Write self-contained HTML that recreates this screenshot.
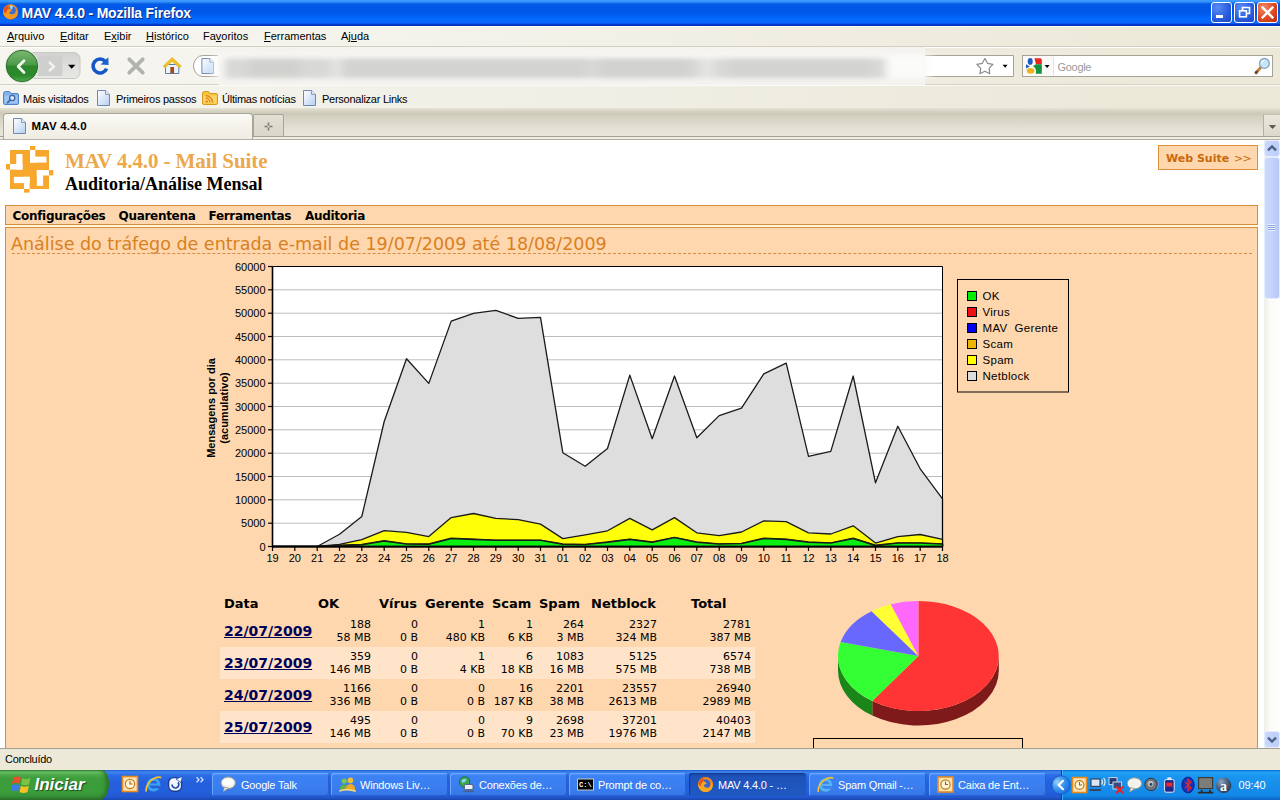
<!DOCTYPE html>
<html lang="pt-BR">
<head>
<meta charset="utf-8">
<title>MAV 4.4.0 - Mozilla Firefox</title>
<style>
*{box-sizing:border-box;margin:0;padding:0}
html,body{width:1280px;height:800px;overflow:hidden;background:#ECE9D8}
body{position:relative;font-family:"Liberation Sans",sans-serif;font-size:11px;color:#000}
.abs{position:absolute}
/* ---------- title bar ---------- */
#titlebar{left:0;top:0;width:1280px;height:26px;background:linear-gradient(to bottom,#3D9BFF 0,#3A96FF 1.5px,#1573EA 3px,#0359E6 4.5px,#0057E6 12px,#005EF4 15px,#0468FC 18px,#0866FE 23px,#0438C8 24.5px,#0030C0 26px)}
#titlebar .ttl{left:21.5px;top:5px;color:#fff;font-weight:bold;font-size:14px;line-height:16px;letter-spacing:-.2px;text-shadow:1px 1px 0 #0A2A80;white-space:nowrap}
.wbtn svg{display:block}
.wbtn{top:2px;width:21px;height:21px;border:1px solid #fff;border-radius:3px;background:radial-gradient(circle at 30% 25%,#5A8CF5 0%,#2A5FE0 55%,#1B45C4 100%)}
#wclose{background:radial-gradient(circle at 30% 25%,#F08A68 0%,#DF4A22 55%,#B92C10 100%)}
/* ---------- menu bar ---------- */
#menubar{left:0;top:26px;width:1280px;height:21px;background:linear-gradient(to right,#F6F5F0 0%,#F3F2EA 40%,#EDEADB 85%,#ECE9D8 100%);border-top:1px solid #FFFAEA;border-bottom:1px solid #D3D0C2}
#menubar span{position:absolute;top:2px;font-size:11px;line-height:14px;white-space:nowrap}
#menubar u{text-decoration:underline}
/* ---------- nav toolbar ---------- */
#navbar{left:0;top:47px;width:1280px;height:38px;background:linear-gradient(to right,#F6F5F0 0%,#F3F2EA 40%,#EDEADB 85%,#ECE9D8 100%);border-top:1px solid #FDFDFB;border-bottom:1px solid #D5D2C4}
#bmbar{left:0;top:85px;width:1280px;height:23px;background:linear-gradient(to right,#F5F4EE 0%,#F1F0E7 40%,#ECE9DA 85%,#EBE8D7 100%);border-top:1px solid #FBFAF6}
#bmbar span{position:absolute;top:6px;font-size:11px;letter-spacing:-.25px;line-height:14px;white-space:nowrap}
/* ---------- tab bar ---------- */
#tabbar{left:0;top:108px;width:1280px;height:29px;background:linear-gradient(to bottom,#E6E3D6 0%,#D6D2C2 12%,#CECAB9 20%,#D3D0C0 30%,#DDDACD 55%,#E5E2D6 80%,#E8E5DA 100%);border-bottom:1px solid #A5A293}
#tabstrip{left:0;top:137px;width:1280px;height:3px;background:#EEECE3;border-bottom:1px solid #B3B0A2;z-index:1}
#tab1{left:3px;top:5px;width:250px;height:26px;border:1px solid #A9A698;border-bottom:none;border-radius:4px 4px 0 0;background:linear-gradient(to bottom,#FBFAF6 0%,#F4F2EA 50%,#EEECE3 100%)}
#tabbar{z-index:2}
#tab1 .t{left:27.5px;top:5px;font-weight:bold;font-size:11.5px;letter-spacing:.2px;line-height:14px;white-space:nowrap}
#newtab{left:253px;top:6px;width:31px;height:22px;border:1px solid #A9A698;border-bottom:none;border-radius:2px 2px 0 0;background:linear-gradient(to bottom,#E2DFD3,#DAD7CA)}
#tablist{left:1263px;top:6px;width:17px;height:22px;border-left:1px solid #B4B1A3;border-top:1px solid #C4C1B3;background:linear-gradient(to bottom,#E9E6DB,#DCD9CC)}
/* ---------- content ---------- */
#content{left:0;top:139px;width:1264px;height:609px;background:#fff;overflow:hidden}
#vscroll{left:1264px;top:139px;width:16px;height:609px;background:linear-gradient(to right,#F0EFE8 0%,#FBFBF8 40%,#FEFEFC 100%)}
#h1{left:65px;top:9.5px;font:bold 21px/24px "Liberation Serif",serif;letter-spacing:-.1px;color:#EBA94B;white-space:nowrap}
#h2{left:65px;top:34px;font:bold 18px/22px "Liberation Serif",serif;color:#000;white-space:nowrap}
#websuite{left:1158px;top:6px;width:100px;height:25px;border:1px solid #E0923A;background:#FFD7AE}
#websuite span{position:absolute;left:7px;top:5.5px;font:bold 11px/14px "DejaVu Sans","Liberation Sans",sans-serif;color:#C8690C;white-space:nowrap}
#mnu{left:5px;top:66px;width:1253px;height:20px;border:1px solid #D58C3F;background:#FFD7AE}
#mnu span{position:absolute;top:3px;font:bold 12px/14px "DejaVu Sans","Liberation Sans",sans-serif;letter-spacing:-.3px;color:#000;white-space:nowrap}
#panel{left:5px;top:88px;width:1253px;height:560px;border:1px solid #D88E3C;background:#FFD7AE}
#ptitle{left:5px;top:5px;font:17.5px/22px "DejaVu Sans","Liberation Sans",sans-serif;color:#D9801E;white-space:nowrap}
#pdash{left:6px;top:25px;width:1240px;height:0;border-top:1px dashed #D58C3F}
#tbl{left:0;top:0;width:1264px;height:609px;font-family:"DejaVu Sans","Liberation Sans",sans-serif}
#tbl .rowbg{position:absolute;left:220px;width:535px;height:32px;background:#FFE4CA}
#tbl .th{position:absolute;top:457px;font-weight:bold;font-size:13px;line-height:16px;white-space:nowrap}
#tbl .dt{position:absolute;left:224px;font-weight:bold;font-size:14px;line-height:16px;color:#00005A;text-decoration:underline;white-space:nowrap}
#tbl .n{position:absolute;font-size:11px;line-height:13px;text-align:right;white-space:nowrap}
#websuite b{font-weight:normal;font-size:11px;letter-spacing:-.8px;margin-left:1px}
/* ---------- status + taskbar ---------- */
#status{left:0;top:748px;width:1280px;height:22px;background:#ECE9D8;border-top:1px solid #A29F8E}
#status span{position:absolute;left:5px;top:3px;font-size:11px;letter-spacing:-.3px;line-height:14px}
#taskbar{left:0;top:770px;width:1280px;height:30px;background:linear-gradient(to bottom,#1C5BD0 0%,#3F86F0 7%,#2B6DE6 17%,#255FDC 40%,#2460DC 70%,#2258D0 90%,#1B47B0 100%)}
#start{left:0;top:0;width:109px;height:30px;border-radius:0 7px 9px 0/0 14px 16px 0;background:linear-gradient(to bottom,#2F7E2F 0%,#6CC26A 7%,#52AE50 14%,#3E9E3D 26%,#3B9C3A 50%,#3C9E3B 72%,#36903A 88%,#2A702A 100%);box-shadow:inset -4px 0 5px -2px #256425}
#startlbl{left:34.5px;top:4px;font:italic bold 17px/22px "Liberation Sans",sans-serif;color:#fff;text-shadow:1px 1px 1px #1E4A1E;letter-spacing:0}
.tb{position:absolute;top:3px;width:117px;height:23px;border-radius:3px;background:linear-gradient(to bottom,#5C9CFA 0%,#3C82F4 12%,#3A7EF0 60%,#3576E6 100%);box-shadow:inset 1px 1px 0 #6CA8FC,inset -1px -1px 0 #2A60CC}
.tb.act{background:linear-gradient(to bottom,#1A48A6 0%,#1E53BA 20%,#2058C2 100%);box-shadow:inset 1px 1px 1px #143A8C}
.tb .ic{position:absolute;left:8px;top:3px;width:17px;height:17px}
.tb span{position:absolute;left:29px;top:5px;font:11px/14px "Liberation Sans",sans-serif;letter-spacing:-.2px;color:#fff;white-space:nowrap}
#tray{left:1061px;top:0;width:219px;height:30px;background:linear-gradient(to bottom,#0F6AD0 0%,#1FA4F6 8%,#1A96F0 20%,#168EEA 55%,#1388E6 85%,#0D64C4 100%);border-left:1px solid #0A3C9C;box-shadow:inset 1px 0 0 #3AB0F8}
.sbtn{left:1px;width:14px;height:15px;border-radius:2px;background:linear-gradient(to right,#CAD8FC,#BCCDF8);box-shadow:0 0 0 1px #E4ECFE}
.sbtn svg{display:block}
#thumb{left:1px;top:19px;width:14px;height:140px;border-radius:2px;background:linear-gradient(to right,#CDDAFD 0%,#C3D3FC 50%,#B6C8F6 100%);box-shadow:0 0 0 1px #E4ECFE}
#thumb i{position:absolute;left:3px;top:66px;width:7px;height:7px;background:repeating-linear-gradient(to bottom,#EEF4FF 0,#EEF4FF 1px,#8CA0D8 1px,#8CA0D8 2px)}
</style>
</head>
<body>
<!-- TITLE BAR -->
<div id="titlebar" class="abs">
  <div class="abs ttl">MAV 4.4.0 - Mozilla Firefox</div>
  <svg class="abs" style="left:2px;top:3px" width="17" height="17" viewBox="0 0 17 17">
    <defs><radialGradient id="gFx" cx=".45" cy=".35" r=".7"><stop offset="0" stop-color="#FFD23C"/><stop offset=".55" stop-color="#F7941E"/><stop offset="1" stop-color="#D9471A"/></radialGradient></defs>
    <circle cx="8.6" cy="8.8" r="7.6" fill="url(#gFx)"/>
    <circle cx="9.6" cy="7.2" r="4.3" fill="#3C6CD8"/>
    <path d="M7.6,3.4 Q9.4,1.8 11,3.6 Q10.6,6 9,6.8 Z" fill="#9ED8F8"/>
    <path d="M1.2,8 Q2.2,2.4 8,1.6 Q5.6,3.8 6.8,5.8 Q9.8,5.8 9.6,8.2 Q7.6,8.4 7,10 Q8.6,12.4 12,11.4 Q14.4,10.2 14.4,7 Q16.8,10.6 14.4,13.8 Q11.4,17 6.6,16 Q1.2,14 1.2,8 Z" fill="#F59A1C"/>
    <path d="M1.2,8 Q2.2,2.4 8,1.6 Q5.6,3.8 6.8,5.8 Q4.2,6.8 4.4,10.4 Q2,10 1.2,8Z" fill="#E2551A"/>
  </svg>
  <div class="abs wbtn" style="left:1211px"><svg width="19" height="19" viewBox="0 0 19 19"><rect x="4" y="12" width="7" height="3" fill="#fff"/></svg></div>
  <div class="abs wbtn" style="left:1234px"><svg width="19" height="19" viewBox="0 0 19 19"><path d="M7.5,7 V4.5 H14.5 V10.5 H12" fill="none" stroke="#fff" stroke-width="1.6"/><rect x="4.6" y="7.8" width="6.8" height="6" fill="none" stroke="#fff" stroke-width="1.6"/></svg></div>
  <div class="abs wbtn" id="wclose" style="left:1257px"><svg width="19" height="19" viewBox="0 0 19 19"><path d="M4.6,4.6 L14.4,14.4 M14.4,4.6 L4.6,14.4" stroke="#fff" stroke-width="2.4" stroke-linecap="square"/></svg></div>
</div>
<!-- MENU BAR -->
<div id="menubar" class="abs">
  <span style="left:7px"><u>A</u>rquivo</span>
  <span style="left:60px"><u>E</u>ditar</span>
  <span style="left:104px">E<u>x</u>ibir</span>
  <span style="left:146px"><u>H</u>istórico</span>
  <span style="left:203px">Fa<u>v</u>oritos</span>
  <span style="left:264px"><u>F</u>erramentas</span>
  <span style="left:341px">Aj<u>u</u>da</span>
</div>
<!-- NAV BAR -->
<div id="navbar" class="abs">
<svg class="abs" style="left:0;top:-1px" width="1280" height="38" viewBox="0 47 1280 38">
  <defs>
    <linearGradient id="gBack" x1="0" y1="0" x2="0" y2="1">
      <stop offset="0" stop-color="#7DB873"/><stop offset="0.46" stop-color="#4C9A48"/><stop offset="0.5" stop-color="#2C872C"/><stop offset="0.8" stop-color="#2A8A2A"/><stop offset="1" stop-color="#4FAE4C"/>
    </linearGradient>
    <linearGradient id="gPill" x1="0" y1="0" x2="0" y2="1">
      <stop offset="0" stop-color="#D2D2D0"/><stop offset="0.5" stop-color="#DEDEDC"/><stop offset="1" stop-color="#E8E8E4"/>
    </linearGradient>
    <linearGradient id="gPage" x1="0" y1="0" x2="1" y2="1">
      <stop offset="0" stop-color="#FFFFFF"/><stop offset="1" stop-color="#B9D2F3"/>
    </linearGradient>
    <filter id="blur3" x="-5%" y="-50%" width="110%" height="200%"><feGaussianBlur stdDeviation="4 2.4"/></filter>
    <filter id="blur1"><feGaussianBlur stdDeviation="0.5"/></filter>
  </defs>
  <!-- forward pill -->
  <rect x="12" y="52.5" width="68" height="26" rx="6" fill="url(#gPill)" stroke="#C8C8C4" stroke-width="1"/>
  <rect x="38" y="55.5" width="24.5" height="20.5" fill="#CFCFCD"/>
  <path d="M49.6,62.6 L54,66.6 L49.6,70.6" fill="none" stroke="#F4F4F2" stroke-width="2.3" stroke-linecap="round" stroke-linejoin="round"/>
  <path d="M68,64.8 h7.4 l-3.7,4 z" fill="#000"/>
  <!-- back -->
  <circle cx="22" cy="66" r="17" fill="#DDE6D8" opacity=".9"/>
  <circle cx="22" cy="66" r="15.7" fill="url(#gBack)" stroke="#2F6E2C" stroke-width="1"/>
  <path d="M24,60.8 L18.2,66.6 L24,72.4" fill="none" stroke="#F4FAF2" stroke-width="2.8" stroke-linecap="round" stroke-linejoin="round"/>
  <!-- reload -->
  <path d="M105.2,61.2 A7,7 0 1 0 106.6,68.6" fill="none" stroke="#1458C8" stroke-width="3.6"/>
  <path d="M100.5,64.6 L108.6,65 L108.3,57.2 Z" fill="#1A62D2"/>
  <!-- stop -->
  <path d="M129.3,59.3 L142.7,72.7 M142.7,59.3 L129.3,72.7" stroke="#B2B2B0" stroke-width="3.8" stroke-linecap="round"/>
  <!-- home -->
  <path d="M165.5,64.5 H178.8 V73.5 H165.5 Z" fill="#EAF4FC" stroke="#5B7FB0" stroke-width="1"/>
  <path d="M163.2,66.2 L172.2,57.6 L181.2,66.2 L179.2,67.6 L172.2,61.2 L165.2,67.6 Z" fill="#F6C326" stroke="#E0A818" stroke-width=".8"/>
  <rect x="170.3" y="67" width="3.8" height="6.3" fill="#A44A22"/>
  <!-- url bar -->
  <path d="M203,55.5 H1013.5 V76.5 H203 A9.5,10.5 0 0 1 203,55.5 Z" fill="#fff" stroke="#A5A395" stroke-width="1"/>
  <path d="M201.9,58.6 H210 L213.6,62.2 V73.6 H201.9 Z" fill="url(#gPage)" stroke="#6E86AE" stroke-width="1"/>
  <path d="M210,58.6 V62.2 H213.6" fill="#fff" stroke="#6E86AE" stroke-width=".9"/>
  <!-- blurred address -->
  <g>
    <rect x="218" y="47" width="707" height="38.5" fill="#F4F3EF"/>
    <g filter="url(#blur3)">
      <rect x="214" y="55" width="716" height="23" fill="#FBFBFA"/>
      <rect x="224" y="58" width="662" height="20" fill="#D8D8D6"/>
      <rect x="250" y="58" width="50" height="20" fill="#D1D1CF"/>
      <rect x="345" y="58" width="240" height="20" fill="#D3D3D1"/>
      <rect x="330" y="58" width="12" height="20" fill="#E2E2E0"/>
      <rect x="600" y="58" width="90" height="20" fill="#D2D2D0"/>
      <rect x="700" y="58" width="14" height="20" fill="#E4E4E2"/>
      <rect x="730" y="58" width="140" height="20" fill="#D3D3D1"/>
    </g>
  </g>
  <!-- star + dropdown -->
  <path d="M984.9,58.5 L987.5,63.3 L992.9,64.3 L989.1,68.3 L989.8,73.7 L984.9,71.3 L980.0,73.7 L980.7,68.3 L976.9,64.3 L982.3,63.3 Z" fill="#fff" stroke="#8A8A88" stroke-width="1.2" stroke-linejoin="round"/>
  <path d="M1002.6,64.8 h5 l-2.5,3 z" fill="#000"/>
  <!-- search bar -->
  <rect x="1022.5" y="55.5" width="250" height="21" fill="#fff" stroke="#A5A395" stroke-width="1"/>
  <rect x="1023" y="56" width="30" height="20" fill="#FBFAF8"/>
  <path d="M1053.5,57 V75.5" stroke="#E4E2DA" stroke-width="1"/>
  <g>
    <ellipse cx="1030.2" cy="61.4" rx="2.5" ry="3.4" fill="#1C5AC4"/>
    <path d="M1026,64.2 L1029.8,66.6 L1026,68.4 Z" fill="#2458B8"/>
    <ellipse cx="1030.6" cy="70.8" rx="3.9" ry="2.9" fill="#EDB41E"/>
    <path d="M1034.4,58.2 H1040.6 L1041.8,59.4 V64.2 H1036 Z" fill="#E8261C"/>
    <path d="M1036,64.2 H1041.8 V73.8 H1035.6 Q1037.4,69.4 1033,66 Z" fill="#14943C"/>
  </g>
  <path d="M1044.6,65 h5 l-2.5,3 z" fill="#000"/>
  <text x="1057.5" y="71.2" style='font:11px "Liberation Sans",sans-serif;fill:#999;letter-spacing:-0.3px'>Google</text>
  <g>
    <path d="M1256,72.8 L1260.9,67.3" stroke="#BE8446" stroke-width="2.8" stroke-linecap="round"/>
    <path d="M1256,72.8 L1256.8,71.9" stroke="#6E4A2A" stroke-width="2.8" stroke-linecap="round"/>
    <circle cx="1264.4" cy="63.4" r="4.9" fill="#C4E8FA" stroke="#86A2C0" stroke-width="1.3"/>
    <path d="M1261.6,63.6 A3,3 0 0 1 1264.6,60.4" fill="none" stroke="#F2FAFE" stroke-width="1.2"/>
  </g>
</svg>
</div>
<!-- BOOKMARKS BAR -->
<div id="bmbar" class="abs">
  <svg class="abs" style="left:0;top:-1px" width="1280" height="24" viewBox="0 85 1280 24">
    <defs>
      <linearGradient id="gPg2" x1="0" y1="0" x2="1" y2="1"><stop offset="0" stop-color="#FFFFFF"/><stop offset="1" stop-color="#B5CFF2"/></linearGradient>
      <g id="pgico"><path d="M0.5,0.5 H8.6 L12.5,4.4 V15.5 H0.5 Z" fill="url(#gPg2)" stroke="#6F88B2" stroke-width="1"/><path d="M8.6,0.5 V4.4 H12.5" fill="#F4F8FE" stroke="#6F88B2" stroke-width=".9"/></g>
    </defs>
    <!-- folder w/ magnifier -->
    <path d="M3.5,93.5 Q3.5,91.5 5.5,91.5 H9.5 L11,93.5 H17 Q18.5,93.5 18.5,95 V103 Q18.5,104.5 17,104.5 H5 Q3.5,104.5 3.5,103 Z" fill="#7FB0EA" stroke="#4F84CC" stroke-width="1"/>
    <path d="M4.5,95.5 H17.5 V103.5 H4.5 Z" fill="#9CC4F2"/>
    <circle cx="12.2" cy="98" r="2.6" fill="#DDEBFA" stroke="#3E64A8" stroke-width="1.3"/>
    <path d="M10.2,100 L7.6,102.6" stroke="#3E64A8" stroke-width="1.7" stroke-linecap="round"/>
    <use href="#pgico" x="97" y="90"/>
    <use href="#pgico" x="303" y="90"/>
    <!-- rss folder -->
    <path d="M202.5,93.5 Q202.5,91.5 204.5,91.5 H208.5 L210,93.5 H216 Q217.5,93.5 217.5,95 V103 Q217.5,104.5 216,104.5 H204 Q202.5,104.5 202.5,103 Z" fill="#F5C43C" stroke="#D79A1C" stroke-width="1"/>
    <path d="M203.5,95.5 H216.5 V103.5 H203.5 Z" fill="#F9D66A"/>
    <circle cx="206.6" cy="101.6" r="1.2" fill="#E87A10"/>
    <path d="M205.6,98.2 A4.4,4.4 0 0 1 210,102.6" fill="none" stroke="#E87A10" stroke-width="1.3"/>
    <path d="M205.6,95.6 A7,7 0 0 1 212.6,102.6" fill="none" stroke="#E87A10" stroke-width="1.3"/>
  </svg>
  <span style="left:23px">Mais visitados</span>
  <span style="left:116px">Primeiros passos</span>
  <span style="left:222px">Últimas notícias</span>
  <span style="left:322px">Personalizar Links</span>
</div>
<!-- TAB BAR -->
<div id="tabbar" class="abs">
  <div id="tab1" class="abs"><svg class="abs" style="left:9px;top:4px" width="14" height="17" viewBox="0 0 14 17"><use href="#pgico" x="0" y="0"/></svg><div class="abs t">MAV 4.4.0</div></div>
  <div id="newtab" class="abs"><svg class="abs" style="left:9px;top:6px" width="11" height="11" viewBox="0 0 11 11"><path d="M5.5,1.5 V9.5 M1.5,5.5 H9.5" stroke="#7E7C72" stroke-width="1.6"/><rect x="4.7" y="4.7" width="1.6" height="1.6" fill="#F4F2EA"/></svg></div>
  <div id="tablist" class="abs"><svg class="abs" style="left:5px;top:10px" width="7" height="5" viewBox="0 0 7 5"><path d="M0.5,0.5 H6.5 L3.5,3.6 Z" stroke="#5A584E" stroke-width=".8" fill="#5A584E"/></svg></div>
</div>
<div id="tabstrip" class="abs"></div>
<!-- CONTENT -->
<div id="content" class="abs">
  <!-- logo -->
  <svg class="abs" style="left:0;top:0" width="64" height="64" viewBox="0 139 64 64">
    <g fill="#F7A72B">
      <rect x="10" y="150" width="39" height="39"/>
      <rect x="30" y="146" width="5.3" height="4"/>
      <rect x="6" y="164" width="4" height="5.6"/>
      <rect x="49" y="170" width="4.3" height="5.4"/>
      <rect x="24" y="189" width="5.6" height="3.6"/>
    </g>
    <g fill="#fff">
      <rect x="16.2" y="154" width="6.3" height="15.6"/><rect x="10" y="164" width="12.5" height="5.6"/>
      <rect x="30" y="150" width="5.3" height="12.6"/><rect x="30" y="156.6" width="16.5" height="6"/>
      <rect x="36.8" y="170" width="6.3" height="15.8"/><rect x="36.8" y="170" width="12.2" height="5.5"/>
      <rect x="13.9" y="176.8" width="15.7" height="6.3"/><rect x="24" y="176.8" width="5.6" height="12.2"/>
    </g>
  </svg>
  <div class="abs" id="h1">MAV 4.4.0 - Mail Suite</div>
  <div class="abs" id="h2">Auditoria/Análise Mensal</div>
  <div class="abs" id="websuite"><span>Web Suite <b>&gt;&gt;</b></span></div>
  <div class="abs" style="left:5px;top:86px;width:1253px;height:2px;background:#FFF7DA"></div>
  <div class="abs" id="mnu">
    <span style="left:6.5px">Configurações</span>
    <span style="left:112.5px">Quarentena</span>
    <span style="left:202.5px">Ferramentas</span>
    <span style="left:299px">Auditoria</span>
  </div>
  <div class="abs" id="panel">
    <div class="abs" id="ptitle">Análise do tráfego de entrada e-mail de 19/07/2009 até 18/08/2009</div>
    <div class="abs" id="pdash"></div>
  </div>
  <svg class="abs" id="chart" style="left:0;top:0" width="1264" height="609" viewBox="0 139 1264 609">
  <style>.ax{font:11px "Liberation Sans",sans-serif;fill:#000}.ayt{font:bold 11px "Liberation Sans",sans-serif;fill:#000}.lg{font:11.5px "Liberation Sans",sans-serif;fill:#000;letter-spacing:.3px;word-spacing:3.6px}</style>
<!--chart-->
<rect x="272.5" y="266.5" width="670.0" height="280.0" fill="#fff"/>
<line x1="272.5" y1="523.2" x2="942.5" y2="523.2" stroke="#bdbdbd" stroke-width="1"/>
<line x1="272.5" y1="499.8" x2="942.5" y2="499.8" stroke="#bdbdbd" stroke-width="1"/>
<line x1="272.5" y1="476.5" x2="942.5" y2="476.5" stroke="#bdbdbd" stroke-width="1"/>
<line x1="272.5" y1="453.2" x2="942.5" y2="453.2" stroke="#bdbdbd" stroke-width="1"/>
<line x1="272.5" y1="429.8" x2="942.5" y2="429.8" stroke="#bdbdbd" stroke-width="1"/>
<line x1="272.5" y1="406.5" x2="942.5" y2="406.5" stroke="#bdbdbd" stroke-width="1"/>
<line x1="272.5" y1="383.2" x2="942.5" y2="383.2" stroke="#bdbdbd" stroke-width="1"/>
<line x1="272.5" y1="359.8" x2="942.5" y2="359.8" stroke="#bdbdbd" stroke-width="1"/>
<line x1="272.5" y1="336.5" x2="942.5" y2="336.5" stroke="#bdbdbd" stroke-width="1"/>
<line x1="272.5" y1="313.2" x2="942.5" y2="313.2" stroke="#bdbdbd" stroke-width="1"/>
<line x1="272.5" y1="289.8" x2="942.5" y2="289.8" stroke="#bdbdbd" stroke-width="1"/>
<path d="M272.5,546.5 L272.5,546.5 L294.8,546.5 L317.2,546.5 L339.5,534.2 L361.8,516.5 L384.2,421.5 L406.5,358.7 L428.8,383.4 L451.2,321.1 L473.5,313.3 L495.8,310.4 L518.2,318.3 L540.5,317.4 L562.8,452.7 L585.2,466.3 L607.5,448.5 L629.8,375.1 L652.2,438.7 L674.5,376.0 L696.8,437.8 L719.2,415.6 L741.5,408.1 L763.8,373.9 L786.2,363.2 L808.5,456.4 L830.8,451.4 L853.2,376.0 L875.5,482.8 L897.8,426.3 L920.2,468.8 L942.5,498.9 L942.5,546.5 Z" fill="#dedede" stroke="#1a1a1a" stroke-width="1.3" stroke-linejoin="round"/>
<path d="M272.5,546.5 L272.5,546.5 L294.8,546.5 L317.2,546.5 L339.5,544.4 L361.8,539.7 L384.2,530.7 L406.5,532.4 L428.8,536.6 L451.2,517.6 L473.5,513.5 L495.8,518.4 L518.2,519.6 L540.5,524.1 L562.8,538.6 L585.2,534.9 L607.5,530.8 L629.8,518.4 L652.2,529.9 L674.5,517.6 L696.8,532.8 L719.2,535.7 L741.5,532.0 L763.8,520.9 L786.2,521.7 L808.5,532.8 L830.8,534.0 L853.2,525.8 L875.5,543.1 L897.8,536.6 L920.2,534.5 L942.5,539.4 L942.5,546.5 Z" fill="#ffff08" stroke="#1a1a1a" stroke-width="1.3" stroke-linejoin="round"/>
<path d="M272.5,546.5 L272.5,546.5 L294.8,546.5 L317.2,546.5 L339.5,545.2 L361.8,544.5 L384.2,540.7 L406.5,543.8 L428.8,544.0 L451.2,538.2 L473.5,539.1 L495.8,540.1 L518.2,540.1 L540.5,540.1 L562.8,544.0 L585.2,544.3 L607.5,541.9 L629.8,539.1 L652.2,541.9 L674.5,537.3 L696.8,541.9 L719.2,543.8 L741.5,543.3 L763.8,538.2 L786.2,539.1 L808.5,541.9 L830.8,542.9 L853.2,538.2 L875.5,545.2 L897.8,542.9 L920.2,542.9 L942.5,543.8 L942.5,546.5 Z" fill="#f0b000" stroke="#1a1a1a" stroke-width="1.3" stroke-linejoin="round"/>
<path d="M272.5,546.5 L272.5,546.5 L294.8,546.5 L317.2,546.5 L339.5,545.6 L361.8,544.8 L384.2,541.1 L406.5,544.2 L428.8,544.4 L451.2,538.6 L473.5,539.5 L495.8,540.4 L518.2,540.4 L540.5,540.4 L562.8,544.4 L585.2,544.6 L607.5,542.3 L629.8,539.5 L652.2,542.3 L674.5,537.6 L696.8,542.3 L719.2,544.2 L741.5,543.7 L763.8,538.6 L786.2,539.5 L808.5,542.3 L830.8,543.2 L853.2,538.6 L875.5,545.6 L897.8,543.2 L920.2,543.2 L942.5,544.2 L942.5,546.5 Z" fill="#0aee12" stroke="#1a1a1a" stroke-width="1.3" stroke-linejoin="round"/>
<path d="M272.5,266.5 H942.5 V546.5" fill="none" stroke="#000" stroke-width="1"/>
<path d="M272.5,266.5 V546.5 H942.5" fill="none" stroke="#000" stroke-width="1.6"/>
<line x1="268.0" y1="546.5" x2="272.5" y2="546.5" stroke="#000" stroke-width="1.2"/>
<text x="265.5" y="550.5" text-anchor="end" class="ax">0</text>
<line x1="268.0" y1="523.2" x2="272.5" y2="523.2" stroke="#000" stroke-width="1.2"/>
<text x="265.5" y="527.2" text-anchor="end" class="ax">5000</text>
<line x1="268.0" y1="499.8" x2="272.5" y2="499.8" stroke="#000" stroke-width="1.2"/>
<text x="265.5" y="503.8" text-anchor="end" class="ax">10000</text>
<line x1="268.0" y1="476.5" x2="272.5" y2="476.5" stroke="#000" stroke-width="1.2"/>
<text x="265.5" y="480.5" text-anchor="end" class="ax">15000</text>
<line x1="268.0" y1="453.2" x2="272.5" y2="453.2" stroke="#000" stroke-width="1.2"/>
<text x="265.5" y="457.2" text-anchor="end" class="ax">20000</text>
<line x1="268.0" y1="429.8" x2="272.5" y2="429.8" stroke="#000" stroke-width="1.2"/>
<text x="265.5" y="433.8" text-anchor="end" class="ax">25000</text>
<line x1="268.0" y1="406.5" x2="272.5" y2="406.5" stroke="#000" stroke-width="1.2"/>
<text x="265.5" y="410.5" text-anchor="end" class="ax">30000</text>
<line x1="268.0" y1="383.2" x2="272.5" y2="383.2" stroke="#000" stroke-width="1.2"/>
<text x="265.5" y="387.2" text-anchor="end" class="ax">35000</text>
<line x1="268.0" y1="359.8" x2="272.5" y2="359.8" stroke="#000" stroke-width="1.2"/>
<text x="265.5" y="363.8" text-anchor="end" class="ax">40000</text>
<line x1="268.0" y1="336.5" x2="272.5" y2="336.5" stroke="#000" stroke-width="1.2"/>
<text x="265.5" y="340.5" text-anchor="end" class="ax">45000</text>
<line x1="268.0" y1="313.2" x2="272.5" y2="313.2" stroke="#000" stroke-width="1.2"/>
<text x="265.5" y="317.2" text-anchor="end" class="ax">50000</text>
<line x1="268.0" y1="289.8" x2="272.5" y2="289.8" stroke="#000" stroke-width="1.2"/>
<text x="265.5" y="293.8" text-anchor="end" class="ax">55000</text>
<line x1="268.0" y1="266.5" x2="272.5" y2="266.5" stroke="#000" stroke-width="1.2"/>
<text x="265.5" y="270.5" text-anchor="end" class="ax">60000</text>
<line x1="272.5" y1="546.5" x2="272.5" y2="551.0" stroke="#000" stroke-width="1.2"/>
<text x="272.5" y="561.5" text-anchor="middle" class="ax">19</text>
<line x1="294.8" y1="546.5" x2="294.8" y2="551.0" stroke="#000" stroke-width="1.2"/>
<text x="294.8" y="561.5" text-anchor="middle" class="ax">20</text>
<line x1="317.2" y1="546.5" x2="317.2" y2="551.0" stroke="#000" stroke-width="1.2"/>
<text x="317.2" y="561.5" text-anchor="middle" class="ax">21</text>
<line x1="339.5" y1="546.5" x2="339.5" y2="551.0" stroke="#000" stroke-width="1.2"/>
<text x="339.5" y="561.5" text-anchor="middle" class="ax">22</text>
<line x1="361.8" y1="546.5" x2="361.8" y2="551.0" stroke="#000" stroke-width="1.2"/>
<text x="361.8" y="561.5" text-anchor="middle" class="ax">23</text>
<line x1="384.2" y1="546.5" x2="384.2" y2="551.0" stroke="#000" stroke-width="1.2"/>
<text x="384.2" y="561.5" text-anchor="middle" class="ax">24</text>
<line x1="406.5" y1="546.5" x2="406.5" y2="551.0" stroke="#000" stroke-width="1.2"/>
<text x="406.5" y="561.5" text-anchor="middle" class="ax">25</text>
<line x1="428.8" y1="546.5" x2="428.8" y2="551.0" stroke="#000" stroke-width="1.2"/>
<text x="428.8" y="561.5" text-anchor="middle" class="ax">26</text>
<line x1="451.2" y1="546.5" x2="451.2" y2="551.0" stroke="#000" stroke-width="1.2"/>
<text x="451.2" y="561.5" text-anchor="middle" class="ax">27</text>
<line x1="473.5" y1="546.5" x2="473.5" y2="551.0" stroke="#000" stroke-width="1.2"/>
<text x="473.5" y="561.5" text-anchor="middle" class="ax">28</text>
<line x1="495.8" y1="546.5" x2="495.8" y2="551.0" stroke="#000" stroke-width="1.2"/>
<text x="495.8" y="561.5" text-anchor="middle" class="ax">29</text>
<line x1="518.2" y1="546.5" x2="518.2" y2="551.0" stroke="#000" stroke-width="1.2"/>
<text x="518.2" y="561.5" text-anchor="middle" class="ax">30</text>
<line x1="540.5" y1="546.5" x2="540.5" y2="551.0" stroke="#000" stroke-width="1.2"/>
<text x="540.5" y="561.5" text-anchor="middle" class="ax">31</text>
<line x1="562.8" y1="546.5" x2="562.8" y2="551.0" stroke="#000" stroke-width="1.2"/>
<text x="562.8" y="561.5" text-anchor="middle" class="ax">01</text>
<line x1="585.2" y1="546.5" x2="585.2" y2="551.0" stroke="#000" stroke-width="1.2"/>
<text x="585.2" y="561.5" text-anchor="middle" class="ax">02</text>
<line x1="607.5" y1="546.5" x2="607.5" y2="551.0" stroke="#000" stroke-width="1.2"/>
<text x="607.5" y="561.5" text-anchor="middle" class="ax">03</text>
<line x1="629.8" y1="546.5" x2="629.8" y2="551.0" stroke="#000" stroke-width="1.2"/>
<text x="629.8" y="561.5" text-anchor="middle" class="ax">04</text>
<line x1="652.2" y1="546.5" x2="652.2" y2="551.0" stroke="#000" stroke-width="1.2"/>
<text x="652.2" y="561.5" text-anchor="middle" class="ax">05</text>
<line x1="674.5" y1="546.5" x2="674.5" y2="551.0" stroke="#000" stroke-width="1.2"/>
<text x="674.5" y="561.5" text-anchor="middle" class="ax">06</text>
<line x1="696.8" y1="546.5" x2="696.8" y2="551.0" stroke="#000" stroke-width="1.2"/>
<text x="696.8" y="561.5" text-anchor="middle" class="ax">07</text>
<line x1="719.2" y1="546.5" x2="719.2" y2="551.0" stroke="#000" stroke-width="1.2"/>
<text x="719.2" y="561.5" text-anchor="middle" class="ax">08</text>
<line x1="741.5" y1="546.5" x2="741.5" y2="551.0" stroke="#000" stroke-width="1.2"/>
<text x="741.5" y="561.5" text-anchor="middle" class="ax">09</text>
<line x1="763.8" y1="546.5" x2="763.8" y2="551.0" stroke="#000" stroke-width="1.2"/>
<text x="763.8" y="561.5" text-anchor="middle" class="ax">10</text>
<line x1="786.2" y1="546.5" x2="786.2" y2="551.0" stroke="#000" stroke-width="1.2"/>
<text x="786.2" y="561.5" text-anchor="middle" class="ax">11</text>
<line x1="808.5" y1="546.5" x2="808.5" y2="551.0" stroke="#000" stroke-width="1.2"/>
<text x="808.5" y="561.5" text-anchor="middle" class="ax">12</text>
<line x1="830.8" y1="546.5" x2="830.8" y2="551.0" stroke="#000" stroke-width="1.2"/>
<text x="830.8" y="561.5" text-anchor="middle" class="ax">13</text>
<line x1="853.2" y1="546.5" x2="853.2" y2="551.0" stroke="#000" stroke-width="1.2"/>
<text x="853.2" y="561.5" text-anchor="middle" class="ax">14</text>
<line x1="875.5" y1="546.5" x2="875.5" y2="551.0" stroke="#000" stroke-width="1.2"/>
<text x="875.5" y="561.5" text-anchor="middle" class="ax">15</text>
<line x1="897.8" y1="546.5" x2="897.8" y2="551.0" stroke="#000" stroke-width="1.2"/>
<text x="897.8" y="561.5" text-anchor="middle" class="ax">16</text>
<line x1="920.2" y1="546.5" x2="920.2" y2="551.0" stroke="#000" stroke-width="1.2"/>
<text x="920.2" y="561.5" text-anchor="middle" class="ax">17</text>
<line x1="942.5" y1="546.5" x2="942.5" y2="551.0" stroke="#000" stroke-width="1.2"/>
<text x="942.5" y="561.5" text-anchor="middle" class="ax">18</text>
<text transform="translate(215,408) rotate(-90)" text-anchor="middle" class="ayt">Mensagens por dia</text>
<text transform="translate(228,408) rotate(-90)" text-anchor="middle" class="ayt">(acumulativo)</text>
<rect x="957.5" y="279.5" width="111" height="112.5" fill="none" stroke="#000" stroke-width="1"/>
<rect x="967.5" y="291.5" width="9" height="9" fill="#00ee00" stroke="#000" stroke-width="1"/>
<text x="982.5" y="300.0" class="lg">OK</text>
<rect x="967.5" y="307.5" width="9" height="9" fill="#ee1111" stroke="#000" stroke-width="1"/>
<text x="982.5" y="316.0" class="lg">Virus</text>
<rect x="967.5" y="323.5" width="9" height="9" fill="#0000ee" stroke="#000" stroke-width="1"/>
<text x="982.5" y="332.0" class="lg">MAV Gerente</text>
<rect x="967.5" y="339.5" width="9" height="9" fill="#f2b400" stroke="#000" stroke-width="1"/>
<text x="982.5" y="348.0" class="lg">Scam</text>
<rect x="967.5" y="355.5" width="9" height="9" fill="#ffff00" stroke="#000" stroke-width="1"/>
<text x="982.5" y="364.0" class="lg">Spam</text>
<rect x="967.5" y="371.5" width="9" height="9" fill="#dcdcdc" stroke="#000" stroke-width="1"/>
<text x="982.5" y="380.0" class="lg">Netblock</text>
<!--/chart-->
  <!-- pie -->
  <g id="pie">
  <path d="M998.8,656.0 A80.4,55.0 0 0 1 872.3,701.1 L872.3,715.6 A80.4,55.0 0 0 0 998.8,670.5 Z" fill="#7E1A1A"/>
  <path d="M872.3,701.1 A80.4,55.0 0 0 1 838.0,656.0 L838.0,670.5 A80.4,55.0 0 0 0 872.3,715.6 Z" fill="#1A861A"/>
  <path d="M918.4,656.0 L918.4,601.0 A80.4,55.0 0 1 1 872.3,701.1 Z" fill="#FF3434"/>
  <path d="M918.4,656.0 L872.3,701.1 A80.4,55.0 0 0 1 840.6,642.1 Z" fill="#34FF34"/>
  <path d="M918.4,656.0 L840.6,642.1 A80.4,55.0 0 0 1 871.6,611.3 Z" fill="#6868FF"/>
  <path d="M918.4,656.0 L871.6,611.3 A80.4,55.0 0 0 1 890.8,604.3 Z" fill="#FFFF34"/>
  <path d="M918.4,656.0 L890.8,604.3 A80.4,55.0 0 0 1 918.4,601.0 Z" fill="#FF68FF"/>
  </g>
  <rect x="813.5" y="738.5" width="209" height="20" fill="none" stroke="#000" stroke-width="1"/>
  </svg>
  <!-- table -->
  <div class="abs" id="tbl">
    <div class="rowbg" style="top:508px"></div>
    <div class="rowbg" style="top:572px"></div>
    <div class="th" style="left:224px">Data</div>
    <div class="th" style="left:318px">OK</div>
    <div class="th" style="left:379px">Vírus</div>
    <div class="th" style="left:425px">Gerente</div>
    <div class="th" style="left:492px">Scam</div>
    <div class="th" style="left:539px">Spam</div>
    <div class="th" style="left:591px">Netblock</div>
    <div class="th" style="left:691px">Total</div>
    <div class="dt" style="top:484px">22/07/2009</div>
    <div class="n" style="right:893px;top:479px">188<br>58 MB</div>
    <div class="n" style="right:846px;top:479px">0<br>0 B</div>
    <div class="n" style="right:779px;top:479px">1<br>480 KB</div>
    <div class="n" style="right:731px;top:479px">1<br>6 KB</div>
    <div class="n" style="right:680px;top:479px">264<br>3 MB</div>
    <div class="n" style="right:607px;top:479px">2327<br>324 MB</div>
    <div class="n" style="right:513px;top:479px">2781<br>387 MB</div>
    <div class="dt" style="top:516px">23/07/2009</div>
    <div class="n" style="right:893px;top:511px">359<br>146 MB</div>
    <div class="n" style="right:846px;top:511px">0<br>0 B</div>
    <div class="n" style="right:779px;top:511px">1<br>4 KB</div>
    <div class="n" style="right:731px;top:511px">6<br>18 KB</div>
    <div class="n" style="right:680px;top:511px">1083<br>16 MB</div>
    <div class="n" style="right:607px;top:511px">5125<br>575 MB</div>
    <div class="n" style="right:513px;top:511px">6574<br>738 MB</div>
    <div class="dt" style="top:548px">24/07/2009</div>
    <div class="n" style="right:893px;top:543px">1166<br>336 MB</div>
    <div class="n" style="right:846px;top:543px">0<br>0 B</div>
    <div class="n" style="right:779px;top:543px">0<br>0 B</div>
    <div class="n" style="right:731px;top:543px">16<br>187 KB</div>
    <div class="n" style="right:680px;top:543px">2201<br>38 MB</div>
    <div class="n" style="right:607px;top:543px">23557<br>2613 MB</div>
    <div class="n" style="right:513px;top:543px">26940<br>2989 MB</div>
    <div class="dt" style="top:580px">25/07/2009</div>
    <div class="n" style="right:893px;top:575px">495<br>146 MB</div>
    <div class="n" style="right:846px;top:575px">0<br>0 B</div>
    <div class="n" style="right:779px;top:575px">0<br>0 B</div>
    <div class="n" style="right:731px;top:575px">9<br>70 KB</div>
    <div class="n" style="right:680px;top:575px">2698<br>23 MB</div>
    <div class="n" style="right:607px;top:575px">37201<br>1976 MB</div>
    <div class="n" style="right:513px;top:575px">40403<br>2147 MB</div>
  </div>
</div>
<div id="vscroll" class="abs">
  <div class="sbtn abs" style="top:2px"><svg width="14" height="15" viewBox="0 0 14 15"><path d="M3,9.4 L7,5.4 L11,9.4" fill="none" stroke="#4D6185" stroke-width="2.4"/></svg></div>
  <div id="thumb" class="abs"><i></i></div>
  <div class="sbtn abs" style="top:593px"><svg width="14" height="15" viewBox="0 0 14 15"><path d="M3,5.6 L7,9.6 L11,5.6" fill="none" stroke="#4D6185" stroke-width="2.4"/></svg></div>
</div>
<!-- STATUS -->
<div id="status" class="abs"><span>Concluído</span></div>
<!-- TASKBAR -->
<div id="taskbar" class="abs">
  <div id="start" class="abs">
    <svg class="abs" style="left:10.5px;top:5px" width="22" height="20" viewBox="0 0 21 19">
      <path d="M2.2,2.6 Q5.6,0.2 9.4,2.4 L8.2,8.4 Q4.6,6.4 1,8.6 Z" fill="#E8502C"/>
      <path d="M10.8,2.8 Q14.4,4.8 18.6,2.6 L17.2,8.8 Q13.6,10.6 9.6,8.8 Z" fill="#7CC242"/>
      <path d="M0.8,10 Q4.4,7.8 8,9.8 L6.8,15.8 Q3.2,13.8 -0.4,16 Z" fill="#3C7CE8"/>
      <path d="M9.4,10.2 Q13.2,12 17,10.2 L15.8,16.2 Q12,18 8.2,16.2 Z" fill="#F6C024"/>
    </svg>
    <span class="abs" id="startlbl">Iniciar</span>
  </div>
  <!-- quick launch -->
  <svg class="abs" style="left:118px;top:0" width="92" height="30" viewBox="118 770 92 30">
    <rect x="122.5" y="776.5" width="15" height="15" fill="#FBE3B4" stroke="#E88A1E" stroke-width="1.6"/>
    <circle cx="130" cy="784" r="4.6" fill="#FFF6DC" stroke="#C87A18" stroke-width="1.2"/>
    <path d="M130,781 V784 H132.4" fill="none" stroke="#A85A10" stroke-width="1.1"/>
    <!-- IE e -->
    <circle cx="153.5" cy="784.6" r="5.4" fill="none" stroke="#3FA2F0" stroke-width="3"/>
    <rect x="149" y="783.4" width="9.4" height="2.2" fill="#3FA2F0"/>
    <rect x="155.4" y="785.8" width="4.6" height="2.6" fill="#2460DC"/>
    <path d="M146.2,791.6 Q145.4,786 151,780.6 Q156.6,775.8 161.2,777.6" fill="none" stroke="#F2C230" stroke-width="1.7"/>
    <!-- third icon -->
    <rect x="168.6" y="777.6" width="13" height="13.6" rx="5" fill="#F2F6FC" stroke="#1A3E98" stroke-width="1.4"/>
    <path d="M172,784.6 A3.4,3.4 0 1 0 178,782.4" fill="none" stroke="#1C4AA8" stroke-width="1.7"/>
    <path d="M176,779 L182.6,776.4 L180.8,782.6 Z" fill="#F4F8FE" stroke="#1C4AA8" stroke-width=".8"/>
    <!-- chevrons -->
    <path d="M196.6,777.2 L199,779.7 L196.6,782.2 M200.6,777.2 L203,779.7 L200.6,782.2" fill="none" stroke="#D6E4FB" stroke-width="1.3"/>
  </svg>
  <div class="tb" style="left:212px"><i class="ic"><svg width="17" height="17" viewBox="0 0 17 17"><ellipse cx="8.2" cy="6.8" rx="7.2" ry="5.8" fill="#F3F3EE" stroke="#9A9A90" stroke-width="1"/><path d="M4.4,11 L3.4,15.6 L8.4,12.2 Z" fill="#F3F3EE" stroke="#9A9A90" stroke-width=".9"/><ellipse cx="8.2" cy="6" rx="5.4" ry="3.4" fill="#FFFFFF"/></svg></i><span>Google Talk</span></div>
  <div class="tb" style="left:331px"><i class="ic"><svg width="17" height="17" viewBox="0 0 17 17"><circle cx="5.2" cy="5" r="2.6" fill="#7EC850"/><circle cx="11.4" cy="4.4" r="2.8" fill="#F0C030"/><path d="M0.6,13.4 Q1,8.4 5.4,8.4 Q8.6,8.4 9.2,12.4 Z" fill="#5DB04A"/><path d="M6.6,14 Q7,8 11.6,8 Q16,8 16.4,14 Z" fill="#F0A828"/><path d="M0.4,15 Q8,12.2 16.8,15.2" fill="none" stroke="#F6D878" stroke-width="1.6"/></svg></i><span>Windows Liv…</span></div>
  <div class="tb" style="left:450px"><i class="ic"><svg width="17" height="17" viewBox="0 0 17 17"><circle cx="6.6" cy="6" r="5.2" fill="#3DA848" stroke="#1E6A34" stroke-width=".9"/><path d="M3.4,4.4 Q6,1.6 8.8,3.6 Q7.4,6.6 4.4,7 Z" fill="#8BD2F2"/><rect x="6.4" y="8.4" width="8.6" height="5.2" rx="1" fill="#E9EEF6" stroke="#4A5E84" stroke-width="1"/><path d="M5.4,15.4 H16" stroke="#4A5E84" stroke-width="1.4"/></svg></i><span>Conexões de…</span></div>
  <div class="tb" style="left:569px"><i class="ic"><svg width="17" height="17" viewBox="0 0 17 17"><rect x="0.5" y="3" width="16" height="11" fill="#000" stroke="#C9C9C9" stroke-width="1"/><text x="2" y="11.4" style='font:bold 7px "Liberation Mono",monospace;fill:#fff'>C:\</text></svg></i><span>Prompt de co…</span></div>
  <div class="tb act" style="left:689px"><i class="ic"><svg width="17" height="17" viewBox="0 0 17 17"><circle cx="8.5" cy="8.5" r="7.6" fill="#F28A1A"/><circle cx="8.8" cy="8" r="4.6" fill="#3A62C8"/><path d="M1.2,7.4 Q2.4,1.8 8.2,1 Q5.4,3.4 6.6,5.4 Q9.6,5.6 9.4,8 Q7.4,8.2 6.6,9.8 Q8.4,12.4 12,11.4 Q14.6,10 14.4,6.4 Q16.6,10 14.4,13.4 Q11.4,16.8 6.4,15.8 Q1.2,13.8 1.2,7.4 Z" fill="#F6A81E"/><path d="M1.2,7.4 Q2.4,1.8 8.2,1 Q5.4,3.4 6.6,5.4 Q4,6.4 4.2,10 Q2,9.6 1.2,7.4Z" fill="#E4571B"/></svg></i><span>MAV 4.4.0 - …</span></div>
  <div class="tb" style="left:809px"><i class="ic"><svg width="17" height="17" viewBox="0 0 17 17"><circle cx="8.6" cy="9" r="5.2" fill="none" stroke="#55B4F4" stroke-width="3"/><rect x="4.2" y="7.8" width="9.4" height="2.2" fill="#55B4F4"/><rect x="10.6" y="10.2" width="4.8" height="2.6" fill="#3C81F3"/><path d="M1.4,16 Q0.4,10 6.2,4.8 Q12,0.4 16.4,2.2" fill="none" stroke="#F2C230" stroke-width="1.6"/></svg></i><span>Spam Qmail -…</span></div>
  <div class="tb" style="left:929px"><i class="ic"><svg width="17" height="17" viewBox="0 0 17 17"><rect x="1" y="1" width="15" height="15" fill="#FBE3B4" stroke="#E88A1E" stroke-width="1.6"/><circle cx="8.5" cy="8.5" r="4.6" fill="#FFF6DC" stroke="#C87A18" stroke-width="1.2"/><path d="M8.5,5.4 V8.5 H11" fill="none" stroke="#A85A10" stroke-width="1.1"/></svg></i><span>Caixa de Ent…</span></div>
  <!-- tray -->
  <div id="tray" class="abs"></div>
  <svg class="abs" style="left:1046px;top:0" width="234" height="30" viewBox="1046 770 234 30">
    <defs><radialGradient id="gA" cx=".35" cy=".3" r=".8"><stop offset="0" stop-color="#8FA6C4"/><stop offset=".5" stop-color="#4A627F"/><stop offset="1" stop-color="#22344E"/></radialGradient><radialGradient id="gTr" cx=".3" cy=".35" r=".75"><stop offset="0" stop-color="#9ED0FA"/><stop offset=".45" stop-color="#3C9AF0"/><stop offset="1" stop-color="#1A6AE2"/></radialGradient></defs>
    <circle cx="1061" cy="785" r="9.2" fill="url(#gTr)" stroke="#1550C0" stroke-width=".8"/>
    <path d="M1063,780.8 L1058.6,785 L1063,789.2" fill="none" stroke="#fff" stroke-width="2.2" stroke-linecap="round" stroke-linejoin="round"/>
    <!-- clock -->
    <rect x="1072.5" y="777.5" width="14" height="15" fill="#FBE3B4" stroke="#E88A1E" stroke-width="1.6"/>
    <circle cx="1079.5" cy="785" r="4.4" fill="#FFF6DC" stroke="#C87A18" stroke-width="1.2"/>
    <path d="M1079.5,782 V785 H1082" fill="none" stroke="#A85A10" stroke-width="1.1"/>
    <!-- network -->
    <rect x="1091" y="779" width="9" height="7.4" fill="#DCE6F6" stroke="#39445E" stroke-width="1.2"/>
    <path d="M1089.6,790 H1101" stroke="#39445E" stroke-width="2"/>
    <path d="M1101.6,779.6 Q1103.4,782 1101.6,784.6 M1103.6,778 Q1106.6,782 1103.6,786.2" fill="none" stroke="#E8F0FC" stroke-width="1.2"/>
    <!-- pcs with x -->
    <rect x="1109" y="777.6" width="8" height="7" fill="#2A3A6A" stroke="#C8D4EC" stroke-width="1"/>
    <rect x="1113" y="782" width="8.6" height="7" fill="#384C84" stroke="#C8D4EC" stroke-width="1"/>
    <path d="M1116,786.6 L1123.4,793.2 M1123.4,786.6 L1116,793.2" stroke="#E82222" stroke-width="2"/>
    <!-- bubble -->
    <ellipse cx="1134.4" cy="783.4" rx="7.2" ry="5.6" fill="#F3F3EE" stroke="#9A9A90" stroke-width="1"/>
    <path d="M1130.6,787.6 L1129.8,792 L1134.6,788.8 Z" fill="#F3F3EE" stroke="#9A9A90" stroke-width=".8"/>
    <!-- speaker -->
    <circle cx="1151" cy="784.4" r="6.2" fill="#6E747C" stroke="#30363E" stroke-width="1"/>
    <circle cx="1150.6" cy="783.8" r="3" fill="#B9BEC6"/>
    <circle cx="1151" cy="784.4" r="1.4" fill="#3A4048"/>
    <path d="M1157,789 Q1159.4,785 1158.4,781" fill="none" stroke="#6A9AF0" stroke-width="1.2"/>
    <!-- battery -->
    <rect x="1164.6" y="779.6" width="9.6" height="12.6" rx="1.6" fill="#1A2A8A" stroke="#E8ECF8" stroke-width="1"/>
    <rect x="1167.4" y="777.4" width="4" height="2.4" fill="#E8ECF8"/>
    <rect x="1166.4" y="782.6" width="6" height="4" fill="#E82A2A"/>
    <!-- bluetooth -->
    <ellipse cx="1188" cy="785" rx="6.2" ry="8" fill="#1430B8" stroke="#0A1C80" stroke-width=".8"/>
    <path d="M1184.8,781.6 L1191,788 L1188,790.6 V779.4 L1191,782 L1184.8,788.4" fill="none" stroke="#E82A2A" stroke-width="1.3"/>
    <!-- monitor -->
    <rect x="1198.6" y="777.6" width="14" height="11" fill="#7C7C78" stroke="#3C3C3A" stroke-width="1.2"/>
    <path d="M1198,792.6 H1213.4 M1201.6,790 V792 M1210,790 V792" stroke="#2A2A28" stroke-width="1.8"/>
    <!-- a -->
    <circle cx="1223.6" cy="785.2" r="7.8" fill="url(#gA)"/>
    <text x="1220" y="790.6" style='font:bold 14px "Liberation Serif",serif;fill:#fff'>a</text>
    <text x="1238.5" y="789.4" style='font:11px "Liberation Sans",sans-serif;fill:#fff;letter-spacing:-.1px'>09:40</text>
  </svg>
</div>
</body>
</html>
